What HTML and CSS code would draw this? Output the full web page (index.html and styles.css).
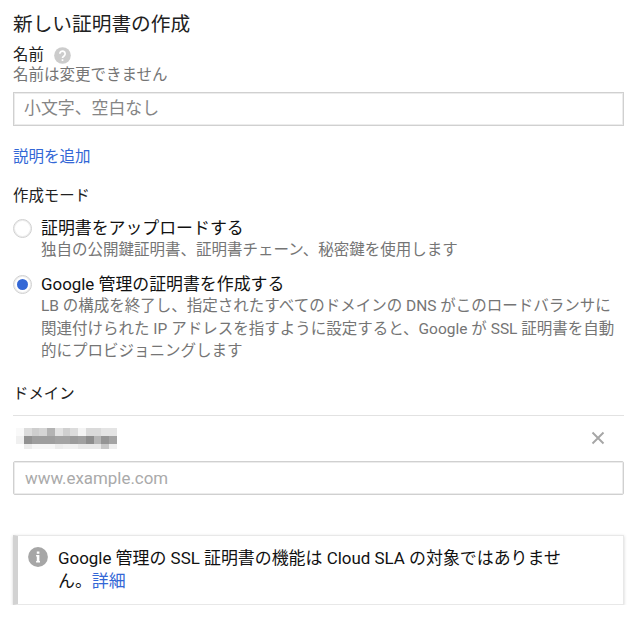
FILE: index.html
```html
<!DOCTYPE html>
<html lang="ja">
<head>
<meta charset="utf-8">
<title>新しい証明書の作成</title>
<link rel="stylesheet" href="styles.css">
</head>
<body>
<main class="form">
  <h1 class="title">新しい証明書の作成</h1>
  <div class="label-row"><span class="label">名前</span>
    <svg class="help" viewBox="0 0 18 18"><circle cx="9" cy="9" r="8.8" fill="#ccc"/><path d="M6.2 7.2a2.8 2.8 0 1 1 4.6 2.1c-1.1.9-1.8 1.3-1.8 2.4" fill="none" stroke="#fff" stroke-width="1.8"/><path d="M8.1 13h1.8v1.8H8.1z" fill="#fff"/></svg>
  </div>
  <p class="hint">名前は変更できません</p>
  <input class="field name" type="text" placeholder="小文字、空白なし">
  <a class="link add">説明を追加</a>
  <h2 class="label mode">作成モード</h2>
  <div class="option">
    <span class="radio"></span>
    <div><p class="option-title">証明書をアップロードする</p>
    <p class="desc">独自の公開鍵証明書、証明書チェーン、秘密鍵を使用します</p></div>
  </div>
  <div class="option managed">
    <span class="radio checked"></span>
    <div><p class="option-title">Google 管理の証明書を作成する</p>
    <p class="desc">LB の構成を終了し、指定されたすべてのドメインの DNS がこのロードバランサに<br>関連付けられた IP アドレスを指すように設定すると、Google が SSL 証明書を自動<br>的にプロビジョニングします</p></div>
  </div>
  <h2 class="label domains">ドメイン</h2>
  <div class="domain-row">
    <svg class="mosaic" viewBox="0 0 13 21" preserveAspectRatio="none" shape-rendering="crispEdges">
      <g><path fill="#f9f9f9" d="M0 0h1v8H0z"/><path fill="#dcdcdc" d="M1 0h1v8H1z"/><path fill="#cecece" d="M2 0h1v8H2z"/><path fill="#d5d5d5" d="M3 0h1v8H3z"/><path fill="#b3b3b3" d="M4 0h1v8H4z"/><path fill="#e2e2e2" d="M5 0h1v8H5z"/><path fill="#d0d0d0" d="M6 0h1v8H6z"/><path fill="#dcdcdc" d="M7 0h1v8H7z"/><path fill="#f4f4f4" d="M8 0h1v8H8z"/><path fill="#dadada" d="M9 0h2v8H9z"/><path fill="#e4e4e4" d="M11 0h2v8h-2z"/></g>
      <g><path fill="#f0f0f0" d="M0 8h1v8H0z"/><path fill="#929292" d="M1 8h1v8H1z"/><path fill="#9e9e9e" d="M2 8h3v8H2z"/><path fill="#a3a3a3" d="M5 8h2v8H5z"/><path fill="#9b9b9b" d="M7 8h1v8H7z"/><path fill="#a0a0a0" d="M8 8h1v8H8z"/><path fill="#8d8d8d" d="M9 8h1v8H9z"/><path fill="#b5b5b5" d="M10 8h1v8h-1z"/><path fill="#959595" d="M11 8h1v8h-1z"/><path fill="#a4a4a4" d="M12 8h1v8h-1z"/></g>
      <g><path fill="#ececec" d="M1 16h1v5H1z"/><path fill="#f6f6f6" d="M2 16h3v5H2z"/><path fill="#ececec" d="M5 16h1v5H5z"/><path fill="#f0f0f0" d="M6 16h2v5H6z"/><path fill="#e8e8e8" d="M8 16h3v5H8z"/><path fill="#c8c8c8" d="M11 16h1v5h-1z"/><path fill="#eee" d="M12 16h1v5h-1z"/></g>
    </svg>
    <svg class="remove" viewBox="0 0 14 14"><path d="M1.5 1.5l11 11M12.5 1.5l-11 11" stroke="#a6a6a6" stroke-width="1.9"/></svg>
  </div>
  <input class="field domain" type="text" placeholder="www.example.com">
  <aside class="notice">
    <svg class="info" viewBox="0 0 20 20"><circle cx="10" cy="10" r="9.9" fill="#a6a6a6"/><path d="M8.8 4.4h2.6v2.3H8.8zM8.1 8h3.3v6h.6v1.4H8.1V14h.7V9.4h-.7z" fill="#fff"/></svg>
    <p>Google 管理の SSL 証明書の機能は Cloud SLA の対象ではありませ<br>ん。<a class="link">詳細</a></p>
  </aside>
</main>
</body>
</html>
```
FILE: styles.css
```css
* { box-sizing: border-box; }
body {
  margin: 0;
  background: #fff;
  color: #212121;
  font-family: Roboto, "Noto Sans CJK JP", sans-serif;
  font-size: 15.5px;
  line-height: 22px;
}
h1, h2, p { margin: 0; font-weight: 400; }
.form { display: flex; flex-direction: column; padding: 11px 16px 0 13px; }
.title { font-size: 19.7px; line-height: 28px; }
.label-row { display: flex; align-items: center; gap: 10px; height: 22px; margin-top: 5px; }
.label { font-size: 15.4px; line-height: 22px; }
.help { width: 17px; height: 17px; }
.hint { height: 18px; line-height: 18px; color: #757575; }
.field {
  width: 611px;
  height: 34px;
  padding: 0 10px;
  border: 1px solid #d0d0d0;
  box-shadow: inset 0 0 0 1px #ececec;
  background: #fff;
  font: 16.9px Roboto, "Noto Sans CJK JP", sans-serif;
}
.field::placeholder { color: #858585; opacity: 1; }
.name { padding-bottom: 2px; margin-top: 8px; }
.link { color: #3367d6; }
.add { margin-top: 20px; }
.mode { margin-top: 17px; }
.option { display: flex; gap: 9px; margin-top: 10px; }
.option-title { font-size: 16.9px; line-height: 22px; color: #111; }
.desc { line-height: 22.4px; color: #757575; white-space: nowrap; }
.managed { margin-top: 12px; }
.radio {
  display: flex;
  flex: none;
  align-items: center;
  justify-content: center;
  width: 19px;
  height: 19px;
  margin-top: 2px;
  border: 1px solid #d0d0d0;
  box-shadow: inset 0 0 0 1px #ececec;
  border-radius: 50%;
}
.checked::after { content: ""; width: 11px; height: 11px; border-radius: 50%; background: #3367d6; }
.domains { margin-top: 20px; }
.domain-row {
  display: flex;
  justify-content: space-between;
  width: 611px;
  height: 46px;
  margin-top: 10.5px;
  padding: 12px 19px 0 3px;
  border-top: 1px solid #e2e2e2;
}
.mosaic { width: 101px; height: 21px; }
.remove { width: 14px; height: 14px; margin-top: 3px; }
.domain { padding-left: 11px; border-radius: 2px; }
.domain::placeholder { color: #aaa; }
.notice {
  display: flex;
  gap: 10px;
  width: 611px;
  height: 70px;
  margin-top: 40px;
  padding: 11px 10px 0;
  border: 1px solid #e8e8e8;
  border-left: 5px solid #d2d2d2;
  box-shadow: 0 1px 3px rgba(0, 0, 0, .18);
  color: #111;
  font-size: 16.93px;
  line-height: 22.4px;
  white-space: nowrap;
}
.info { flex: none; width: 20px; height: 20px; }
```
